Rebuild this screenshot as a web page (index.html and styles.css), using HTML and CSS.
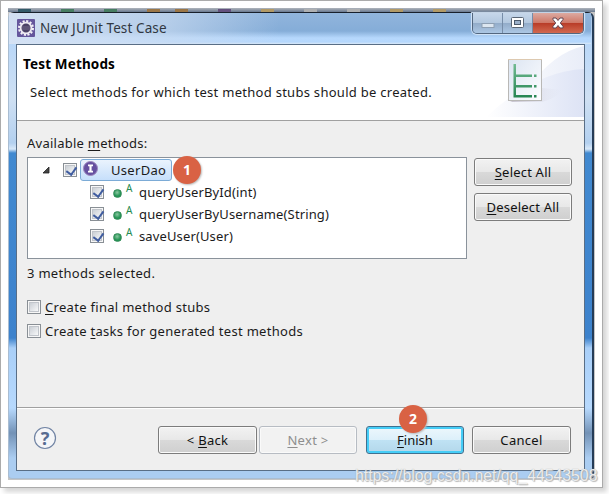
FILE: index.html
```html
<!DOCTYPE html>
<html lang="en">
<head>
<meta charset="utf-8">
<title>New JUnit Test Case</title>
<link rel="stylesheet" href="styles.css">
</head>
<body>
<div class="frame">
  <div class="desktop">
    <div class="strip"><i class="g1"></i><i class="g2"></i><i class="g3"></i><i class="g4"></i><i class="g5"></i><i class="g6"></i><i class="g7"></i><i class="g8"></i><i class="g8"></i><i class="g9"></i><i class="g9"></i></div>
    <div class="window">
      <div class="titlebar">
        <svg class="appicon" width="18" height="18" viewBox="0 0 18 18"><rect width="18" height="18" rx="1" fill="#65569c"/><circle cx="9" cy="9" r="6.9" fill="none" stroke="#f4f2f7" stroke-width="2.2" stroke-dasharray="2.1 1.51"/><circle cx="9" cy="9" r="5.4" fill="#4b4265" stroke="#eeeaf2" stroke-width="1.8"/><path d="M5 8h8M5 10h8" stroke="#726889"/></svg>
        <span class="title">New JUnit Test Case</span>
        <div class="controls">
          <div class="ctl min"><svg width="14" height="7"><rect x="1" y="1.5" width="12" height="4" fill="#dce6f0" stroke="#8e9fb2"/></svg></div>
          <div class="ctl max"><svg width="14" height="12"><rect x=".5" y=".5" width="12" height="10" rx="1" fill="#fff" stroke="#596574"/><rect x="3.5" y="3.5" width="6" height="4" fill="#9aafc9" stroke="#4b5a6c"/></svg></div>
          <div class="ctl close"><svg width="14" height="12" viewBox="0 0 14 12"><path d="M2 1h3l2 2.5L9 1h3v1.5L9.3 6l2.7 3.3V11H9L7 8.5 5 11H2V9.3L4.7 6 2 2.5z" fill="#fff" stroke="#634653"/></svg></div>
        </div>
      </div>
      <div class="client">
        <div class="header">
          <svg class="banner" width="108" height="75" viewBox="0 0 108 75">
            <defs>
              <linearGradient id="sw" x1="0" x2="1"><stop offset="0" stop-color="#fff"/><stop offset="1" stop-color="#dde3f5"/></linearGradient>
              <linearGradient id="sw2" x1="0" x2="1"><stop offset="0" stop-color="#fff"/><stop offset="1" stop-color="#e9edf8"/></linearGradient>
              <linearGradient id="pg" x1="0" y1="0" x2="1" y2="1"><stop offset="0" stop-color="#dce5f2"/><stop offset="1" stop-color="#fdfdff"/></linearGradient>
              <linearGradient id="gr" x1="0" y1="0" x2="0" y2="1"><stop offset="0" stop-color="#72bb92"/><stop offset="1" stop-color="#258552"/></linearGradient>
              <linearGradient id="sh" x1="0" x2="1"><stop offset="0" stop-color="#a79faf"/><stop offset="1" stop-color="#dfe3f1" stop-opacity="0"/></linearGradient>
            </defs>
            <path d="M50 45Q78 7 108 1V72H20z" fill="url(#sw2)"/>
            <path d="M10 72Q60 26 108 24V72z" fill="url(#sw)"/>
            <path d="M66 43L88 45Q78 54 66 57H34z" fill="url(#sh)" opacity=".6"/>
            <rect x="32.5" y="14.500" width="33" height="41" fill="url(#pg)" stroke="#b9b8b6"/>
            <path d="M32 14.500h34" stroke="#ddc9b0"/>
            <path d="M37.500 19h2.500v10.500H56V32H40v8H56v2.500H40V50H56v2.500H37.500zM58 29.500h2.500V32H58zM58 40h2.500v2.500H58zM58 50h2.500v2.500H58z" fill="url(#gr)"/>
          </svg>
          <h1>Test Methods</h1>
          <p>Select methods for which test method stubs should be created.</p>
        </div>
        <div class="content">
          <div class="label"><span>Available <u>m</u>ethods:</span></div>
          <div class="main">
            <div class="tree">
              <div class="row root">
                <svg class="arrow" width="8" height="8"><path d="M7 1v6H1z" fill="#444" stroke="#222" stroke-width=".8"/></svg>
                <span class="check on"></span>
                <div class="selected">
                  <svg width="15" height="15" viewBox="0 0 15 15"><circle cx="7.500" cy="7.500" r="7" fill="#6550a0" stroke="#9d86bd"/><path d="M5 3.500h5v1.700H8.600v4.600H10v1.700H5V9.800h1.400V5.200H5z" fill="#fff"/></svg>
                  <span>UserDao</span>
                </div>
                <span class="badge one">1</span>
              </div>
              <div class="row"><span class="check on"></span><i class="dot"></i><b class="abs">A</b><span>queryUserById(int)</span></div>
              <div class="row"><span class="check on"></span><i class="dot"></i><b class="abs">A</b><span>queryUserByUsername(String)</span></div>
              <div class="row"><span class="check on"></span><i class="dot"></i><b class="abs">A</b><span>saveUser(User)</span></div>
            </div>
            <div class="side">
              <div class="btn"><span><u>S</u>elect All</span></div>
              <div class="btn"><span><u>D</u>eselect All</span></div>
            </div>
          </div>
          <div class="status">3 methods selected.</div>
          <div class="option"><span class="check"></span><span><u>C</u>reate final method stubs</span></div>
          <div class="option"><span class="check"></span><span>Create <u>t</u>asks for generated test methods</span></div>
        </div>
        <div class="footer">
          <div class="help"><svg width="24" height="24" viewBox="0 0 24 24"><circle cx="12" cy="12" r="10.500" fill="#f5f6f8" stroke="#7184a4" stroke-width="1.200"/></svg><span>?</span></div>
          <div class="btn back"><span>&lt; <u>B</u>ack</span></div>
          <div class="btn next"><span><u>N</u>ext &gt;</span></div>
          <div class="btn finish"><span><u>F</u>inish</span><span class="badge two">2</span></div>
          <div class="btn cancel"><span>Cancel</span></div>
        </div>
      </div>
    </div>
  </div>
</div>
<div class="watermark">https://blog.csdn.net/qq_44543508</div>
</body>
</html>
```
FILE: styles.css
```css
* { box-sizing: border-box; }
body {
  margin: 0; width: 609px; height: 494px; overflow: hidden; background: #fff;
  font: 13px/20px "Noto Sans", "Open Sans", sans-serif; color: #1b1b1b; position: relative;
  letter-spacing: .3px;
}
u { text-decoration-thickness: 1px; text-underline-offset: 2px; }
.frame {
  width: 603px; height: 488px; padding: 7px; border: 1px solid #ababab;
  background: #fff; box-shadow: 4px 4px 5px #d5d5d5;
}
.desktop { width: 587px; height: 472px; background: #c5c5c5; display: flex; flex-direction: column; }
.strip { height: 4px; background: linear-gradient(#b0b5bc, #68788f); display: flex; padding: 1px 0 0 10px; gap: 30px; overflow: hidden; }
.strip i { width: 13px; height: 3px; flex: none; background: #477d62; }
.strip .g1 { background: #345b69; }
.strip .g4, .strip .g5 { background: #9b7646; }
.strip .g5 { margin-left: -15px; }
.strip .g6 { background: #64517e; }
.strip .g7, .strip .g9 { background: #b29a66; }
.strip .g8 { background: #aeb0b2; }
.window {
  width: 586px; height: 467px; padding: 0 8px 7px 7px; border: 1px solid #a9bdd2;
  border-top: 1px solid #18202b; border-right: 2px solid #253c57; border-radius: 6px 6px 4px 4px;
  background: linear-gradient(#a5c2e3 0, #b9d7f8 30px, #cfe0f3 85px, #b3d0ef 130px, #d8e8f8 136px, #4189d0 140px, #3d82cc 325px, #a9cff8 335px, #b7d9fd 395px, #7392b6 420px, #abcdf1 445px);
}
.titlebar {
  height: 31px; margin: 0 -7px; padding-left: 8px; display: flex; align-items: flex-start;
  background: linear-gradient(90deg, rgba(214,226,243,.95) 0, rgba(203,220,241,.65) 160px, rgba(128,174,220,0) 270px), linear-gradient(#91b5dc, #85add8 18px, #b6d8fd 25px, #b5d7fc 29px, #d9e8f8);
}
.appicon { margin-top: 6px; flex: none; }
.title { margin: 5px 0 0 5px; font-size: 13.5px; white-space: nowrap; letter-spacing: .1px; color: #303741; }
.controls {
  display: flex; margin-left: auto; margin-right: 7px; width: 112px; height: 21px; border: 1px solid #53677f;
  border-top: 0; border-radius: 0 0 5px 5px; overflow: hidden; box-shadow: 0 0 1px 1px #d6e7fa;
}
.ctl { width: 30px; display: flex; align-items: center; justify-content: center; border-right: 1px solid #778da8; background: linear-gradient(#c6d7ea, #b3c8df 49%, #92abc8 50%, #acc7e4); }
.ctl.min { padding-top: 4px; }
.ctl.close { width: 50px; border-right: 0; background: linear-gradient(#dcaaa1, #cf7969 48%, #b83b27 50%, #d26950); }
.client { width: 569px; height: 427px; border: 1px solid #596e86; background: #efefef; display: flex; flex-direction: column; }
.header { height: 76px; border-bottom: 1px solid #a0a0a0; background: #fff; position: relative; padding: 9px 6px; }
.banner { position: absolute; right: 0; top: 0; }
h1 { position: relative; margin: 0; font-size: 13.5px; line-height: 20px; font-weight: 700; color: #000; letter-spacing: .15px; }
.header p { position: relative; margin: 8px 0 0 7px; white-space: nowrap; letter-spacing: .28px; }
.content { height: 286px; padding: 12px 10px 0; }
.label { height: 24px; letter-spacing: .25px; }
.main { display: flex; gap: 7px; }
.tree { width: 440px; height: 102px; background: #fff; border: 1px solid #8a929b; padding-top: 1px; letter-spacing: .13px; }
.row { display: flex; height: 22px; align-items: center; padding-left: 62px; white-space: nowrap; }
.root { padding-left: 14px; }
.check { width: 14px; height: 14px; flex: none; border: 1px solid #898f95; background: linear-gradient(135deg, #bfc5cc, #f5f6f7 80%); box-shadow: inset 0 0 0 1px #f7f7f7, inset 0 0 0 2px #c1c5cb; position: relative; }
.check.on::after { content: ""; position: absolute; left: 4px; top: 1px; width: 5px; height: 8px; border: solid #405da0; border-width: 0 2px 2px 0; transform: rotate(36deg); }
.arrow { margin-right: 13px; }
.selected { width: 92px; height: 22px; margin-left: 3px; border: 1px solid #7cabd6; border-radius: 3px; background: linear-gradient(#eaf3fd, #c6dffb); display: flex; align-items: center; padding-left: 2px; letter-spacing: .3px; }
.selected svg { margin-top: -3px; }
.selected span { margin-left: 13px; }
.badge { width: 28px; height: 28px; flex: none; border-radius: 50%; background: #d96244; color: #fff; text-align: center; font: bold 14px/28px "Open Sans", sans-serif; letter-spacing: 0; box-shadow: 1px 1px 2px #bbb; }
.one { margin-left: 1px; position: relative; }
.dot { width: 9px; height: 9px; border-radius: 50%; margin: 2px 0 0 9px; background: radial-gradient(circle at 45% 35%, #8bc7a0, #239354 60%); border: 1px solid #338b58; }
.abs { font: 10px/10px "Noto Sans", sans-serif; color: #238a50; margin: -9px 0 0 4px; width: 13px; }
.side { display: flex; flex-direction: column; gap: 7px; padding-top: 1px; }
.btn { width: 99px; height: 28px; flex: none; display: flex; justify-content: center; align-items: center; white-space: nowrap; border: 1px solid #7c7c7c; border-radius: 3px; box-shadow: inset 0 0 0 1px #fafafa; background: linear-gradient(#f2f2f2, #e8e8e8 49%, #d9d9d9 51%, #cfcfcf); color: #111; }
.side .btn { width: 98px; letter-spacing: .2px; }
.status { margin-top: 4px; height: 20px; }
.option { height: 24px; display: flex; align-items: center; gap: 4px; white-space: nowrap; }
.status + .option { margin-top: 12px; }
.footer { flex: 1; border-top: 1px solid #a0a0a0; box-shadow: inset 0 1px #fff; display: flex; padding: 18px 0 0 16px; }
.help { position: relative; width: 24px; height: 24px; margin-right: 101px; }
.help span { position: absolute; inset: 0; text-align: center; font: bold 18px/24px "Noto Sans", sans-serif; letter-spacing: 0; color: #586c91; }
.next { margin-left: 2px; color: #8e8e8e; background: #f2f2f2; border-color: #b7bcc3; }
.next, .finish { width: 98px; }
.finish { letter-spacing: 0; margin-left: 9px; position: relative; border-color: #3f7190; box-shadow: inset 0 0 0 2px #45cdf7; background: linear-gradient(#edf7fc, #dcf0fa 49%, #bfe2f4 51%, #b3d7ea); }
.cancel { margin-left: 8px; }
.two { position: absolute; left: 32px; top: -22px; }
.watermark { position: absolute; left: 355px; top: 467px; font: 15.8px/18px "Liberation Sans", sans-serif; letter-spacing: 0; color: rgba(255,255,255,.82); text-shadow: 0 0 1px #999, 1px 1px 1px #bbb; white-space: nowrap; }
```
